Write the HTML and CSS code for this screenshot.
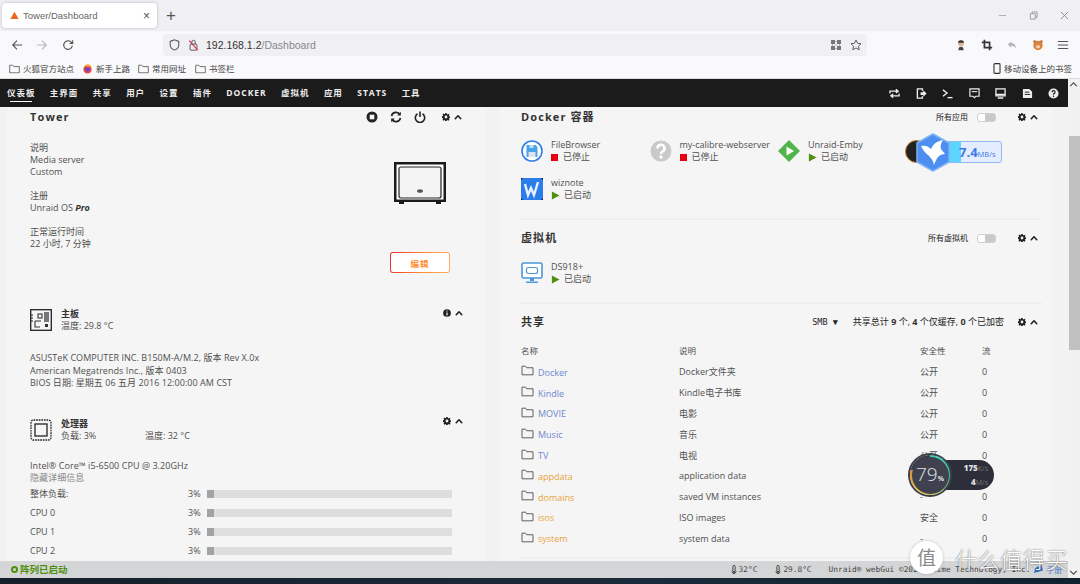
FILE: index.html
```html
<!DOCTYPE html>
<html lang="zh">
<head>
<meta charset="utf-8">
<title>Tower/Dashboard</title>
<link rel="stylesheet" href="styles.css">
</head>
<body>
<svg class="defs" width="0" height="0">
  <symbol id="gear" viewBox="0 0 16 16"><path fill="currentColor" fill-rule="evenodd" d="M6.600 0h2.800l.4 2.200 1.300.6 1.900-1.300 2 2-1.300 1.900.6 1.300 2.200.4v2.800l-2.200.4-.6 1.300 1.300 1.900-2 2-1.900-1.300-1.300.6-.4 2.200H6.600l-.4-2.200-1.300-.6-1.900 1.300-2-2 1.300-1.900-.6-1.300-2.200-.4V6.600l2.200-.4.6-1.300-1.300-1.900 2-2 1.900 1.300 1.300-.6zM8 5.200a2.800 2.800 0 1 0 0 5.600 2.800 2.800 0 0 0 0-5.600z"/></symbol>
  <symbol id="up" viewBox="0 0 16 16"><path fill="none" stroke="currentColor" stroke-width="3.200" stroke-linecap="round" stroke-linejoin="round" d="M2.500 11.500 8 5.500l5.500 6"/></symbol>
  <symbol id="folder" viewBox="0 0 16 14"><path fill="none" stroke="currentColor" stroke-width="1.200" stroke-linejoin="round" d="M1 12.500V1.500h4.500l1.500 2h8v9z"/></symbol>
  <symbol id="play" viewBox="0 0 10 10"><path fill="#4f8f0e" d="M1 .5 9.500 5 1 9.500z"/></symbol>
  <symbol id="therm" viewBox="0 0 8 12"><path fill="none" stroke="#444" stroke-width="1.300" d="M2.500 7V2a1.500 1.500 0 0 1 3 0v5a2.500 2.500 0 1 1-3 0z"/><circle cx="4" cy="9" r="1.500" fill="#444"/></symbol>
</svg>

<div class="tabbar">
  <div class="tab">
    <svg class="tab-logo" viewBox="0 0 10 10"><path fill="#e8681c" d="M5 .8 9.600 9H.4z"/></svg>
    <span class="tab-title">Tower/Dashboard</span>
    <span class="tab-close">×</span>
  </div>
  <span class="tab-new">+</span>
  <div class="win-controls">
    <svg viewBox="0 0 10 10"><path d="M1 5h8" stroke="#aaa" fill="none"/></svg>
    <svg viewBox="0 0 10 10"><path d="M1.500 3h5.500v6H1.500zM3.500 3V1h5.500v6H7" stroke="#999" fill="none"/></svg>
    <svg viewBox="0 0 10 10"><path d="M1 1l8 8M9 1l-8 8" stroke="#888" fill="none"/></svg>
  </div>
</div>

<div class="toolbar">
  <svg class="tool tool-back" viewBox="0 0 14 14"><path d="M13 7H2M7 2 2 7l5 5" fill="none" stroke="#555" stroke-width="1.300"/></svg>
  <svg class="tool tool-fwd" viewBox="0 0 14 14"><path d="M1 7h11M7 2l5 5-5 5" fill="none" stroke="#b9b9bd" stroke-width="1.300"/></svg>
  <svg class="tool tool-reload" viewBox="0 0 14 14"><path d="M12 7.500A5 5 0 1 1 10.500 3.500L12 5M12.500 1.500V5.300H8.800" fill="none" stroke="#555" stroke-width="1.300"/></svg>
  <div class="urlbar">
    <svg class="url-shield" viewBox="0 0 12 14"><path d="M6 1 1 2.800V7c0 3 2.500 5 5 6 2.500-1 5-3 5-6V2.800z" fill="none" stroke="#555" stroke-width="1.200"/></svg>
    <svg class="url-lock" viewBox="0 0 12 14"><rect x="2" y="6" width="8" height="7" rx="1" fill="none" stroke="#555" stroke-width="1.100"/><path d="M4 6V3.500a2 2 0 0 1 4 0V6" fill="none" stroke="#555" stroke-width="1.100"/><path d="M1 2l10 11" stroke="#e22850" stroke-width="1.300"/></svg>
    <span class="url-host">192.168.1.2</span><span class="url-path">/Dashboard</span>
    <svg class="url-qr" viewBox="0 0 10 10"><path d="M0 0h4v4H0zM6 0h4v4H6zM0 6h4v4H0zM6 6h4v4H6zM4.500 1h1v1h-1zM4.500 4.500h1v1h-1zM1 4.500h1v1H1zM8 4.500h1v1H8zM4.500 8h1v1h-1z" fill="#777"/></svg>
    <svg class="url-star" viewBox="0 0 14 14"><path d="M7 1.200 8.800 5l4.100.5-3 2.900.8 4.100L7 10.500l-3.700 2 .8-4.100-3-2.900L5.200 5z" fill="none" stroke="#555" stroke-width="1.100" stroke-linejoin="round"/></svg>
  </div>
  <div class="tool-right">
    <svg viewBox="0 0 14 14"><circle cx="7" cy="5" r="3.500" fill="#d9b79c"/><path d="M3.500 4.500A3.500 3 0 0 1 10.500 4.500z" fill="#333"/><path d="M4 13c0-3 1-4 3-4s3 1 3 4z" fill="#444"/></svg>
    <svg viewBox="0 0 14 14"><path d="M4 1v9h9M1 4h9v9" fill="none" stroke="#33363a" stroke-width="2"/></svg>
    <svg viewBox="0 0 14 14"><path d="M6 3 2 6.500 6 10V7.800c3 0 4.500 1 5.500 3 0-3.500-2-6-5.500-6z" fill="#b5b5b8"/></svg>
    <svg viewBox="0 0 14 14"><circle cx="7" cy="7.500" r="5.500" fill="#d9853f"/><circle cx="3" cy="3" r="1.500" fill="#b8682a"/><circle cx="11" cy="3" r="1.500" fill="#b8682a"/><ellipse cx="7" cy="9" rx="2.500" ry="2" fill="#f1d0a8"/></svg>
    <svg viewBox="0 0 14 14"><path d="M1 3h12M1 7h12M1 11h12" stroke="#555" stroke-width="1.200"/></svg>
  </div>
</div>

<div class="bookmarks">
  <span class="bm"><svg class="bm-folder" viewBox="0 0 16 14"><use href="#folder"/></svg>火狐官方站点</span>
  <span class="bm bm-ff"><svg class="bm-folder" viewBox="0 0 12 12"><circle cx="6" cy="6.500" r="5" fill="#e8483e"/><circle cx="6" cy="6.500" r="2.800" fill="#7a3fc0"/><path d="M2 3c2-3.500 7-3.500 9 .5-2-1.500-3-1-4 0C5 2.500 3.500 2.500 2 3z" fill="#f5a623"/></svg>新手上路</span>
  <span class="bm bm-common"><svg class="bm-folder" viewBox="0 0 16 14"><use href="#folder"/></svg>常用网址</span>
  <span class="bm bm-tags"><svg class="bm-folder" viewBox="0 0 16 14"><use href="#folder"/></svg>书签栏</span>
  <span class="bm bm-mobile"><svg class="bm-phone" viewBox="0 0 8 12"><rect x=".7" y=".7" width="6.600" height="10.600" rx="1" fill="none" stroke="#333" stroke-width="1.200"/></svg>移动设备上的书签</span>
</div>

<div class="app">
  <div class="page">
    <nav class="nav">
      <div class="nav-links">
        <a class="nav-link is-active">仪表板</a>
        <a class="nav-link">主界面</a>
        <a class="nav-link">共享</a>
        <a class="nav-link">用户</a>
        <a class="nav-link">设置</a>
        <a class="nav-link">插件</a>
        <a class="nav-link">DOCKER</a>
        <a class="nav-link">虚拟机</a>
        <a class="nav-link">应用</a>
        <a class="nav-link">STATS</a>
        <a class="nav-link">工具</a>
      </div>
      <div class="nav-icons">
        <svg viewBox="0 0 12 12"><path d="M1 6V3.500h8M7.500 1.500 10 3.500 7.500 5.500M11 6v2.500H3M4.500 6.500 2 8.500l2.500 2" fill="none" stroke="#eee" stroke-width="1.400"/></svg>
        <svg viewBox="0 0 12 12"><path d="M7 3V1H1.500v10H7V9" fill="none" stroke="#eee" stroke-width="1.500"/><path d="M5 4.500h3V2.500L11.500 6 8 9.500v-2H5z" fill="#eee"/></svg>
        <svg viewBox="0 0 12 12"><path d="M1 2l4.500 3.500L1 9" fill="none" stroke="#eee" stroke-width="1.500"/><path d="M6 10.500h5.500" stroke="#eee" stroke-width="1.500"/></svg>
        <svg viewBox="0 0 12 12"><path d="M1 1h10v8H7.500L6 10.500 4.500 9H1z" fill="none" stroke="#eee" stroke-width="1.300"/><path d="M3 4h6" stroke="#eee" stroke-width="1.200"/></svg>
        <svg viewBox="0 0 12 12"><path d="M1 1h10v7.500H1z" fill="none" stroke="#eee" stroke-width="1.400"/><path d="M1 7h10M3 11h6" stroke="#eee" stroke-width="1.600"/></svg>
        <svg viewBox="0 0 12 12"><path d="M1 1h7l3 3v7H1z" fill="#eee"/><path d="M3 4.500h5M3 7h6" stroke="#1c1b1b"/></svg>
        <svg viewBox="0 0 12 12"><circle cx="6" cy="6" r="5.500" fill="#eee"/><path d="M4.300 4.500A1.700 1.700 0 1 1 6 6.300V7.300" fill="none" stroke="#1c1b1b" stroke-width="1.300"/><circle cx="6" cy="9" r=".8" fill="#1c1b1b"/></svg>
      </div>
    </nav>

    <main class="main">
      <section class="col col-left">
        <div class="head">
          <h2 class="title">Tower</h2>
          <div class="head-actions head-actions-tower">
            <svg class="act-lg" viewBox="0 0 12 12"><circle cx="6" cy="6" r="5.500" fill="#222"/><rect x="3.700" y="3.700" width="4.600" height="4.600" fill="#f5f5f5"/></svg>
            <svg class="act-lg" viewBox="0 0 12 12"><path d="M1.500 5A4.700 4.700 0 0 1 10 3.500M10.500 7A4.700 4.700 0 0 1 2 8.500" fill="none" stroke="#222" stroke-width="1.700"/><path d="M10.800 .8V4.500H7.200zM1.200 11.200V7.500h3.600z" fill="#222"/></svg>
            <svg class="act-lg" viewBox="0 0 12 12"><path d="M3.500 2.800a4.700 4.700 0 1 0 5 0" fill="none" stroke="#222" stroke-width="1.600"/><path d="M6 .5v5.500" stroke="#222" stroke-width="1.600"/></svg>
            <svg class="act gear-gap"><use href="#gear"/></svg>
            <svg class="act"><use href="#up"/></svg>
          </div>
        </div>
        <div class="tower">
          <div class="tower-info">
            <p class="line">说明</p>
            <p class="line">Media server</p>
            <p class="line">Custom</p>
            <p class="line gap">注册</p>
            <p class="line">Unraid OS <b class="pro">Pro</b></p>
            <p class="line gap">正常运行时间</p>
            <p class="line">22 小时, 7 分钟</p>
          </div>
          <div class="tower-aside">
            <svg class="case" viewBox="0 0 52 43"><rect x="1" y="1" width="50" height="38" fill="#fff" stroke="#1b1b1b" stroke-width="2"/><rect x="1.500" y="1.500" width="49" height="37" fill="none" stroke="#1b1b1b" stroke-width="2"/><rect x="5" y="5" width="42" height="31" rx="2" fill="#f4f4f4" stroke="#222" stroke-width="1.200"/><ellipse cx="26" cy="29" rx="3" ry="1.800" fill="#555"/><path d="M5 39h5v3H5zM42 39h5v3h-5z" fill="#1b1b1b"/></svg>
            <button class="edit">编辑</button>
          </div>
        </div>

        <div class="block block-mb">
          <svg class="block-icon" viewBox="0 0 22 22"><rect x=".7" y=".7" width="20.600" height="20.600" fill="none" stroke="#222" stroke-width="1.300"/><rect x="14" y="3" width="5" height="10" fill="#777"/><rect x="8" y="5" width="4" height="4" fill="none" stroke="#333" stroke-width="1.100"/><path d="M5 12h6M5 12v6h5" fill="none" stroke="#333" stroke-width="1.100"/><rect x="15" y="15" width="3" height="3" fill="#333"/><path d="M1 6h2M1 9h2M1 12h2" stroke="#222"/></svg>
          <div class="block-text">
            <h3 class="block-title">主板</h3>
            <p class="line">温度: 29.8 °C</p>
          </div>
          <div class="head-actions">
            <svg class="act" viewBox="0 0 12 12"><circle cx="6" cy="6" r="5.800" fill="#222"/><path d="M6 2.200v1.600M6 5.300v4.500" stroke="#f5f5f5" stroke-width="1.800"/></svg>
            <svg class="act"><use href="#up"/></svg>
          </div>
        </div>
        <div class="mb-lines">
          <p class="line-l">ASUSTeK COMPUTER INC. B150M-A/M.2, 版本 Rev X.0x</p>
          <p class="line-l">American Megatrends Inc., 版本 0403</p>
          <p class="line-l">BIOS 日期: 星期五 06 五月 2016 12:00:00 AM CST</p>
        </div>

        <div class="block block-cpu">
          <svg class="block-icon" viewBox="0 0 22 22"><rect x="1" y="1" width="20" height="20" rx="2.500" fill="none" stroke="#222" stroke-width="1.300" stroke-dasharray="1.700 .9"/><rect x="5" y="5" width="12" height="12" fill="none" stroke="#222" stroke-width="1.300"/></svg>
          <div class="block-text">
            <h3 class="block-title">处理器</h3>
            <p class="line cpu-sub"><span class="cpu-load">负载: 3%</span><span>温度: 32 °C</span></p>
          </div>
          <div class="head-actions">
            <svg class="act"><use href="#gear"/></svg>
            <svg class="act"><use href="#up"/></svg>
          </div>
        </div>
        <div class="cpu-lines">
          <p class="line-l">Intel® Core™ i5-6500 CPU @ 3.20GHz</p>
          <p class="line-l muted">隐藏详细信息</p>
        </div>
        <div class="meter"><span class="meter-name">整体负载:</span><span class="meter-val">3%</span><span class="bar"><i class="bar-fill"></i></span></div>
        <div class="meter"><span class="meter-name">CPU 0</span><span class="meter-val">3%</span><span class="bar"><i class="bar-fill"></i></span></div>
        <div class="meter"><span class="meter-name">CPU 1</span><span class="meter-val">3%</span><span class="bar"><i class="bar-fill"></i></span></div>
        <div class="meter"><span class="meter-name">CPU 2</span><span class="meter-val">3%</span><span class="bar"><i class="bar-fill"></i></span></div>
      </section>

      <section class="col col-right">
        <div class="head">
          <h2 class="title">Docker 容器</h2>
          <div class="head-actions">
            <span class="toggle-label">所有应用</span><span class="toggle"></span>
            <svg class="act gear-wide"><use href="#gear"/></svg>
            <svg class="act"><use href="#up"/></svg>
          </div>
        </div>
        <div class="apps">
          <div class="app-tile">
            <svg class="app-icon" viewBox="0 0 22 22"><circle cx="11" cy="11" r="10" fill="#fff" stroke="#2f7fe6" stroke-width="1.600"/><path d="M5.500 5h9l2 2v10h-11z" fill="#4aa3e8"/><rect x="7.500" y="12" width="7" height="5" fill="#dfe4ea"/><rect x="8.500" y="5" width="4" height="3" fill="#bfe0fa"/></svg>
            <div><p class="line">FileBrowser</p><p class="line status"><i class="stop"></i>已停止</p></div>
          </div>
          <div class="app-tile">
            <svg class="app-icon" viewBox="0 0 22 22"><circle cx="11" cy="11" r="10.500" fill="#c9c9c9"/><path d="M7.500 8.500A3.500 3.500 0 1 1 12.500 11.500c-1 .6-1.500 1-1.500 2.500" fill="none" stroke="#fff" stroke-width="2.600"/><circle cx="11" cy="17" r="1.700" fill="#fff"/></svg>
            <div><p class="line">my-calibre-webserver</p><p class="line status"><i class="stop"></i>已停止</p></div>
          </div>
          <div class="app-tile">
            <svg class="app-icon" viewBox="0 0 22 22"><path d="M11 0 22 11 11 22 0 11z" fill="#52b54b"/><path d="M8.500 6.500 16 11l-7.500 4.500z" fill="#fff"/></svg>
            <div><p class="line">Unraid-Emby</p><p class="line status"><svg class="play"><use href="#play"/></svg>已启动</p></div>
          </div>
          <div class="app-tile"></div>
          <div class="app-tile">
            <svg class="app-icon" viewBox="0 0 22 22"><rect width="22" height="22" fill="#2b7de9"/><path d="M0 0h2L0 2zM22 0v2l-2-2zM0 22v-2l2 2zM22 22h-2l2-2z" fill="#123"/><path d="M4 6l3 11 3-7 3 7 4-13" fill="none" stroke="#e8f2ff" stroke-width="2.400"/></svg>
            <div><p class="line">wiznote</p><p class="line status"><svg class="play"><use href="#play"/></svg>已启动</p></div>
          </div>
        </div>
        <hr class="rule">
        <div class="head">
          <h2 class="title">虚拟机</h2>
          <div class="head-actions">
            <span class="toggle-label">所有虚拟机</span><span class="toggle"></span>
            <svg class="act gear-wide"><use href="#gear"/></svg>
            <svg class="act"><use href="#up"/></svg>
          </div>
        </div>
        <div class="apps apps-vm">
          <div class="app-tile">
            <svg class="app-icon" viewBox="0 0 22 22"><rect x="1" y="1" width="20" height="15" rx="1.500" fill="#fff" stroke="#4d96d9" stroke-width="1.600"/><rect x="5.500" y="5.500" width="11" height="6" rx="2" fill="none" stroke="#4d96d9" stroke-width="1.200"/><path d="M9 16h4v3H9zM5 19.500h12v1.500H5z" fill="#4d96d9"/></svg>
            <div><p class="line">DS918+</p><p class="line status"><svg class="play"><use href="#play"/></svg>已启动</p></div>
          </div>
        </div>
        <hr class="rule">
        <div class="head">
          <h2 class="title">共享</h2>
          <div class="head-actions">
            <span class="smb">SMB ▼</span>
            <span class="share-sum">共享总计 <b>9</b> 个, <b>4</b> 个仅缓存, <b>0</b> 个已加密</span>
            <svg class="act gear-sum"><use href="#gear"/></svg>
            <svg class="act"><use href="#up"/></svg>
          </div>
        </div>
        <div class="shares">
          <div class="share-head"><span>名称</span><span>说明</span><span>安全性</span><span>流</span></div>
          <div class="share-row"><span class="share-name"><svg class="folder"><use href="#folder"/></svg><a class="link-blue">Docker</a></span><span>Docker文件夹</span><span>公开</span><span>0</span></div>
          <div class="share-row"><span class="share-name"><svg class="folder"><use href="#folder"/></svg><a class="link-blue">Kindle</a></span><span>Kindle电子书库</span><span>公开</span><span>0</span></div>
          <div class="share-row"><span class="share-name"><svg class="folder"><use href="#folder"/></svg><a class="link-blue">MOVIE</a></span><span>电影</span><span>公开</span><span>0</span></div>
          <div class="share-row"><span class="share-name"><svg class="folder"><use href="#folder"/></svg><a class="link-blue">Music</a></span><span>音乐</span><span>公开</span><span>0</span></div>
          <div class="share-row"><span class="share-name"><svg class="folder"><use href="#folder"/></svg><a class="link-blue">TV</a></span><span>电视</span><span>公开</span><span>0</span></div>
          <div class="share-row"><span class="share-name"><svg class="folder"><use href="#folder"/></svg><a class="link-orange">appdata</a></span><span>application data</span><span>-</span><span>0</span></div>
          <div class="share-row"><span class="share-name"><svg class="folder"><use href="#folder"/></svg><a class="link-orange">domains</a></span><span>saved VM instances</span><span>-</span><span>0</span></div>
          <div class="share-row"><span class="share-name"><svg class="folder"><use href="#folder"/></svg><a class="link-orange">isos</a></span><span>ISO images</span><span>安全</span><span>0</span></div>
          <div class="share-row"><span class="share-name"><svg class="folder"><use href="#folder"/></svg><a class="link-orange">system</a></span><span>system data</span><span>-</span><span>0</span></div>
        </div>
        <hr class="rule rule-end">
      </section>
    </main>

    <footer class="footer">
      <span class="array-status"><i class="ring"></i>阵列已启动</span>
      <div class="foot-right">
        <span class="temp"><svg class="therm"><use href="#therm"/></svg>32°C</span>
        <span class="temp temp-b"><svg class="therm"><use href="#therm"/></svg>29.8°C</span>
        <span class="copy">Unraid® webGui ©2021, Lime Technology, Inc.</span>
        <a class="manual"><svg class="book" viewBox="0 0 10 10"><path d="M0 9 1.500 3l7-3L10 6z" fill="#2f6fc7"/></svg>手册</a>
      </div>
    </footer>
  </div>
  <aside class="scrollbar">
    <svg class="sb-arrow" viewBox="0 0 10 10"><path d="M2 6.500 5 3.500l3 3" fill="none" stroke="#555" stroke-width="1.200"/></svg>
    <div class="sb-thumb"></div>
    <svg class="sb-arrow sb-down" viewBox="0 0 10 10"><path d="M2 3.500 5 6.500l3-3" fill="none" stroke="#555" stroke-width="1.200"/></svg>
  </aside>
</div>
<div class="taskbar"></div>

<div class="xl">
  <span class="xl-dot"></span>
  <div class="xl-bar"><i class="xl-fill"></i><span class="xl-text"><b>7.4</b>MB/s</span></div>
  <svg class="xl-hex" viewBox="0 0 34 39"><path d="M17 1 33 10v19L17 38 1 29V10z" fill="#4c8ff0" stroke="#7db1f7" stroke-width="1.500" stroke-linejoin="round"/><path d="M5 13C9 12 12 13 15 16 17 11 21 8 27 7 25 10 24 13 25 16L29 21C26 21 24 22 22 24 20 27 19 29 18 32 17 27 15 25 12 22 9 20 7 17 5 13z" fill="#fff"/></svg>
</div>

<div class="gauge">
  <div class="gauge-pill">
    <p class="rate"><i class="dot-up"></i><b>175</b><small>K/s</small></p>
    <p class="rate"><i class="dot-down"></i><b>4</b><small>M/s</small></p>
  </div>
  <div class="gauge-ring"><div class="gauge-core"><span class="gauge-num">79</span><small class="gauge-pct">%</small></div></div>
</div>

<div class="watermark">
  <span class="wm-badge">值</span>
  <span class="wm-text">什么值得买</span>
</div>
</body>
</html>
```
FILE: styles.css
```css
* { box-sizing: border-box; }
html, body { margin: 0; height: 584px; overflow: hidden; }
body {
  position: relative;
  display: flex;
  flex-direction: column;
  width: 1080px;
  background: #f2f2f2;
  color: #505050;
  font: 9px/12px "Open Sans", "Noto Sans CJK SC", sans-serif;
}
p, h2, h3 { margin: 0; font-weight: normal; font-size: inherit; }
svg { display: block; flex: none; }
.defs { position: absolute; }

/* browser chrome */
.tabbar { display: flex; align-items: center; height: 31px; padding-left: 2px; background: #f0f0f4; }
.tab {
  display: flex; align-items: center; width: 155px; height: 25px; padding-left: 8px;
  background: #fff; border-radius: 4px; box-shadow: 0 0 3px rgba(0,0,0,.25);
  font: 9.500px "Liberation Sans", "Noto Sans CJK SC", sans-serif; color: #666;
}
.tab-logo { width: 9px; height: 9px; margin-right: 4px; }
.tab-title { flex: 1; }
.tab-close { margin-right: 7px; font-size: 12px; color: #555; }
.tab-new { margin-left: 9px; font: 17px "Liberation Sans", sans-serif; color: #555; }
.win-controls { display: flex; gap: 22px; margin-left: auto; margin-right: 11px; }
.win-controls svg { width: 9px; height: 9px; }

.toolbar { display: flex; align-items: center; height: 28px; background: #f9f9fb; }
.tool { width: 12px; height: 12px; }
.tool-back { margin-left: 11px; }
.tool-fwd { margin-left: 13px; }
.tool-reload { margin-left: 14px; }
.urlbar {
  display: flex; align-items: center; width: 704px; height: 22px; margin-left: 89px; padding-left: 6px;
  background: #f0f0f4; border-radius: 4px;
  font: 10.500px "Liberation Sans", sans-serif;
}
.url-shield { width: 11px; height: 12px; }
.url-lock { width: 11px; height: 12px; margin-left: 8px; margin-right: 7px; }
.url-host { color: #333; }
.url-path { color: #888; }
.url-qr { width: 10px; height: 10px; margin-left: auto; }
.url-star { width: 12px; height: 12px; margin: 0 5px 0 9px; }
.tool-right { display: flex; gap: 13.500px; margin-left: 88px; }
.tool-right svg { width: 12px; height: 12px; }

.bookmarks {
  display: flex; align-items: center; height: 20px; padding: 0 8px 0 9px;
  background: #f9f9fb; color: #444; border-bottom: 1px solid #ddd;
  font-size: 8.500px;
}
.bm { display: flex; align-items: center; }
.bm-folder { width: 11px; height: 10px; margin-right: 3px; color: #555; }
.bm-ff { margin-left: 8px; }
.bm-common { margin-left: 8px; }
.bm-tags { margin-left: 9px; }
.bm-mobile { margin-left: auto; }
.bm-phone { width: 8px; height: 11px; margin-right: 3px; }

/* application frame */
.app { display: flex; height: 499px; }
.page { display: flex; flex-direction: column; width: 1068px; }
.nav {
  display: flex; align-items: center; justify-content: space-between; height: 28px; padding: 0 9px 0 7px;
  background: #1c1b1b; color: #eee; font-weight: 700; font-size: 8.500px; letter-spacing: .95px;
}
.nav-links { display: flex; gap: 14.500px; }
.nav-link { position: relative; white-space: nowrap; }
.nav-link.is-active::after {
  content: ""; position: absolute; left: 3px; right: 3px; bottom: -3px; height: 1px; background: #fff;
}
.nav-icons { display: flex; gap: 15.500px; }
.nav-icons svg { width: 11px; height: 11px; }

.main { display: grid; grid-template-columns: 478px 552px; column-gap: 15px; height: 454px; padding-left: 7px; overflow: hidden; }
.col { height: 454px; overflow: hidden; background: #f5f5f5; }
.col-left { padding: 0 33px 0 23px; }
.col-right { padding: 0 10px 0 19px; }

.head { display: flex; align-items: center; justify-content: space-between; height: 20px; }
.col-right .head { padding: 0 4px 0 2px; }
.title { font-size: 11px; font-weight: 700; letter-spacing: 1.100px; color: #333; }
.head-actions { display: flex; align-items: center; gap: 4px; color: #222; }
.head-actions-tower { margin-right: -10px; gap: 12px; }
.act { width: 8px; height: 8px; }
.act-lg { width: 12px; height: 12px; }
.gear-gap { margin-left: 4px; margin-right: -8px; }
.head-actions-tower .act { width: 8px; height: 8px; }

.line { line-height: 12px; white-space: nowrap; }
.line-l { line-height: 12.500px; white-space: nowrap; letter-spacing: .05px; }
.gap { margin-top: 12px; }
.pro { font-style: italic; color: #333; }
.muted { color: #888; }

.tower { display: flex; justify-content: space-between; margin-top: 15px; }
.tower-aside { display: flex; flex-direction: column; align-items: center; width: 60px; margin-top: 20px; margin-right: 2px; }
.case { width: 52px; height: 43px; }
.edit {
  width: 60px; height: 21px; margin-top: 47px; padding: 0;
  background: linear-gradient(#fff, #fff) padding-box, linear-gradient(100deg, #e8312f, #ff8c2f 55%, #ffb066) border-box;
  border: 1.500px solid transparent;
  border-radius: 3px; color: #ff8c2f; font: 700 8.500px "Open Sans", "Noto Sans CJK SC", sans-serif; letter-spacing: 1px;
}

.block { display: flex; align-items: flex-start; }
.block-mb { margin-top: 35px; }
.block-cpu { margin-top: 28px; }
.block-icon { width: 22px; height: 22px; margin-top: 1px; }
.block-text { flex: 1; margin-left: 9px; }
.block-title { font-weight: 700; line-height: 12px; color: #333; }
.block .head-actions { margin-top: 0; height: 10px; margin-right: -11px; }
.block-cpu .head-actions { margin-top: -2px; }
.mb-lines { margin-top: 20px; }
.cpu-lines { margin-top: 18px; }
.cpu-sub { display: flex; }
.cpu-load { width: 84px; }

.meter { display: flex; align-items: center; height: 19px; }
.meter-name { width: 158px; }
.meter-val { width: 19px; }
.bar { width: 245px; height: 8px; background: #dedede; }
.bar-fill { display: block; width: 7px; height: 8px; background: #a3a3a3; }

/* apps */
.apps { display: grid; grid-template-columns: repeat(4, 128.500px); margin-top: 12px; padding-left: 2px; }
.apps-vm { margin-top: 13px; }
.app-tile { display: flex; align-items: flex-start; gap: 8px; height: 38px; }
.app-icon { width: 22px; height: 22px; margin-top: 1px; }
.status { display: flex; align-items: center; }
.stop { width: 7px; height: 7px; margin-right: 5px; background: #e60012; }
.play { width: 9px; height: 9px; margin-right: 4px; }
.toggle-label { margin-right: 5px; font-size: 8px; }
.toggle {
  width: 19px; height: 9px; border-radius: 3px; border: 1px solid #cfcfcf;
  background: linear-gradient(90deg, #fff 40%, #c9c9c9 40%);
}
.gear-wide { margin-left: 18px; }
.rule { height: 2px; margin: 3px 0 8px; border: 0; background: #efefef; }
.rule-end { margin: 8px 0 0; }

/* shares */
.smb { margin-right: 11px; font: 8.500px "DejaVu Sans Mono", monospace; }
.share-sum { white-space: nowrap; }
.share-sum b { color: #333; }
.gear-sum { margin-left: 10px; }
.shares { margin-top: 13px; padding-left: 2px; }
.share-head, .share-row { display: grid; grid-template-columns: 158px 241px 62px 1fr; }
.share-head { height: 17px; font-size: 8.500px; }
.share-row { align-items: center; height: 20.800px; }
.share-name { display: flex; align-items: center; }
.folder { width: 13px; height: 11px; margin-right: 4px; margin-top: -3px; color: #555; }
.link-blue { color: #6f88cc; margin-top: 1px; }
.link-orange { color: #e8a33d; margin-top: 1px; }

/* footer */
.footer {
  display: flex; align-items: center; justify-content: space-between; height: 17px; padding: 0 6px 0 11px;
  background: #d4d5d6;
}
.array-status { display: flex; align-items: center; color: #4f8f0e; font-weight: 700; font-size: 9.500px; }
.ring { width: 7px; height: 7px; margin-right: 2px; border: 2px solid #4f8f0e; border-radius: 50%; }
.foot-right { display: flex; align-items: center; font: 7.800px "DejaVu Sans Mono", monospace; color: #444; }
.temp { display: flex; align-items: center; }
.temp-b { margin-left: 18px; }
.therm { width: 6px; height: 9px; margin-right: 2px; }
.copy { margin-left: 17px; white-space: nowrap; }
.manual { display: flex; align-items: center; margin-left: 4px; color: #4a7cc9; font-family: "Open Sans", "Noto Sans CJK SC", sans-serif; }
.book { width: 9px; height: 9px; margin-right: 3px; }

.scrollbar { position: relative; display: flex; flex-direction: column; width: 12px; background: #f1f1f1; }
.sb-arrow { width: 11px; height: 11px; }
.sb-thumb { width: 11px; height: 214px; margin: 46px 0 0 1px; background: #c1c1c1; }
.sb-down { margin-top: auto; }
.taskbar { height: 6px; background: linear-gradient(90deg, #16202c, #1b2a3a 60%, #10222f); }

/* floating widgets */
.xl { position: absolute; left: 905px; top: 133px; width: 97px; height: 39px; }
.xl-dot { position: absolute; left: 0; top: 7px; width: 23px; height: 23px; border-radius: 50%; background: #222; border: 1px solid #c9862f; }
.xl-bar {
  position: absolute; left: 40px; top: 8px; width: 57px; height: 22px; overflow: hidden;
  background: #e4edff; border: 1px solid #92b8f6; border-radius: 3px;
}
.xl-fill { position: absolute; left: 0; top: 0; width: 15px; height: 100%; background: #5cd6ff; }
.xl-text { position: absolute; left: 13px; top: 3px; font: 7.500px/14px "Open Sans", sans-serif; color: #3d7ae6; white-space: nowrap; }
.xl-text b { font-size: 13px; }
.xl-hex { position: absolute; left: 11px; top: 0; width: 34px; height: 39px; }

.gauge { position: absolute; left: 910px; top: 455px; width: 84px; height: 40px; }
.gauge-pill {
  position: absolute; left: 16px; top: 5px; width: 68px; height: 30px; padding: 1px 6px 0 26px;
  background: #2c2f39; border-radius: 15px; color: #ddd;
}
.rate { position: relative; height: 14px; font: 700 8px/14px "Open Sans", sans-serif; text-align: right; }
.rate small { font-size: 7px; font-weight: 400; color: #777; }
.dot-up, .dot-down { position: absolute; left: -9px; top: 5px; width: 4px; height: 4px; transform: rotate(45deg); }
.dot-up { background: #3aa7ea; }
.dot-down { background: #2fbf4f; }
.gauge-ring {
  position: absolute; left: 0; top: 0; width: 40px; height: 40px; padding: 1.500px; border-radius: 50%;
  background: conic-gradient(#3fc9b0 0 90deg, #a8c05a 150deg, #e8b94a 220deg, #d98a3c 285deg, #3c3f4a 285deg);
  box-shadow: 0 0 0 2px #3c3f4a;
}
.gauge-core {
  display: flex; align-items: baseline; justify-content: center; width: 37px; height: 37px; border-radius: 50%;
  background: #3f424e; color: #dfe2e6; line-height: 35px;
}
.gauge-num { font: 300 19px/35px "Open Sans", sans-serif; }
.gauge-pct { font: 700 7px "Open Sans", sans-serif; }

.watermark { position: absolute; left: 910px; top: 541px; display: flex; align-items: center; gap: 12px; color: #fff; pointer-events: none; }
.wm-badge {
  width: 33px; height: 33px; border-radius: 50%; background: #fff; color: #8a8a8a;
  box-shadow: 0 0 3px rgba(90,90,90,.35);
  font: 400 19px/32px "Noto Sans CJK SC", sans-serif; text-align: center;
}
.wm-text { font: 300 22px/30px "Noto Sans CJK SC", sans-serif; letter-spacing: .6px; white-space: nowrap; text-shadow: 0 0 2px rgba(80,80,80,.75), 0 0 1px rgba(80,80,80,.6); }
```
